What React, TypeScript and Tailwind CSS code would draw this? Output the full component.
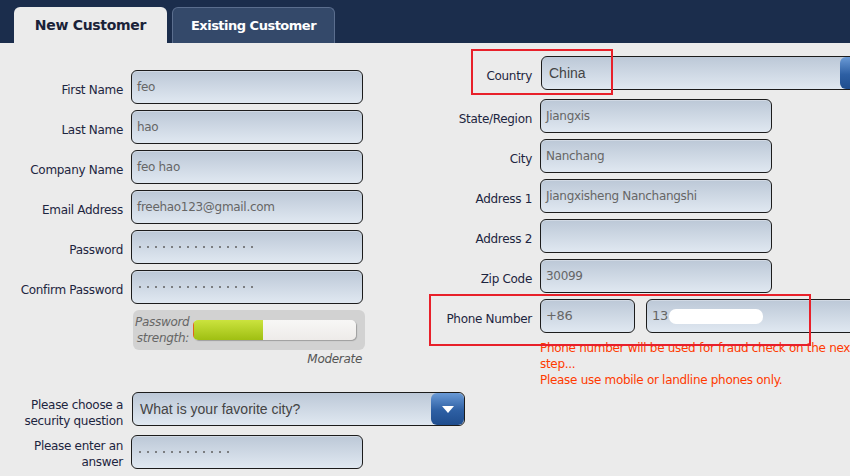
import React from "react";

const label = "font-['DejaVu_Sans',sans-serif] text-[12px] tracking-[-0.3px] text-[#1d2540]";
const field =
  "flex h-[34px] shrink-0 items-center rounded-[6px] border border-[#1c1c1c] bg-[linear-gradient(#bcc8d7,#e0e8f1)] px-[5px] font-['DejaVu_Sans',sans-serif] text-[12px] tracking-[-0.3px] text-[#666] shadow-[inset_0_1px_0_rgba(255,255,255,0.3)]";

function Dots({ count }: { count: number }) {
  return (
    <span className="flex gap-[6px] pl-[2px]">
      {Array.from({ length: count }).map((_, i) => (
        <span key={i} className="size-[2px] rounded-full bg-[#5f5f5f]" />
      ))}
    </span>
  );
}

function Row({
  name,
  children,
  width,
  pad = "pt-[6px]",
}: {
  name: React.ReactNode;
  children: React.ReactNode;
  width: string;
  pad?: string;
}) {
  return (
    <div className="flex items-center gap-[8px]">
      <div className={`${width} ${pad} shrink-0 text-right leading-[16px] ${label}`}>{name}</div>
      {children}
    </div>
  );
}

function Arrow() {
  return (
    <div className="flex h-full w-[33px] shrink-0 items-center justify-center rounded-[6px] bg-[linear-gradient(#6a9ad6,#2d5fa3_55%,#1f4d8e)]">
      <svg width="12" height="7" viewBox="0 0 12 7">
        <path d="M0 0h12L6 7z" fill="#fff" />
      </svg>
    </div>
  );
}

export default function App() {
  return (
    <div className="relative h-[476px] w-[850px] overflow-hidden bg-[#ebebeb]">
      <div className="flex h-[43px] items-end gap-[5px] bg-[#1b2d4c] pl-[14px]">
        <div className="flex h-[36px] w-[153px] items-center justify-center rounded-t-[6px] bg-[#ebebeb] pt-[1px] font-['DejaVu_Sans',sans-serif] text-[14px] font-bold tracking-[-0.3px] text-[#1a2238]">
          New Customer
        </div>
        <div className="flex h-[36px] w-[163px] items-center justify-center rounded-t-[6px] border border-b-0 border-[#5b6e8e] bg-[#34496a] font-['DejaVu_Sans',sans-serif] text-[13px] font-bold tracking-[-0.5px] text-white">
          Existing Customer
        </div>
      </div>

      <div className="flex">
        <div className="flex w-[430px] shrink-0 flex-col pt-[27px]">
          <div className="flex flex-col gap-[6px]">
            <Row name="First Name" width="w-[123px]">
              <div className={`${field} w-[232px]`}>feo</div>
            </Row>
            <Row name="Last Name" width="w-[123px]">
              <div className={`${field} w-[232px]`}>hao</div>
            </Row>
            <Row name="Company Name" width="w-[123px]">
              <div className={`${field} w-[232px]`}>feo hao</div>
            </Row>
            <Row name="Email Address" width="w-[123px]">
              <div className={`${field} w-[232px]`}>freehao123@gmail.com</div>
            </Row>
            <Row name="Password" width="w-[123px]">
              <div className={`${field} w-[232px]`}>
                <Dots count={15} />
              </div>
            </Row>
            <Row name="Confirm Password" width="w-[123px]">
              <div className={`${field} w-[232px]`}>
                <Dots count={15} />
              </div>
            </Row>
          </div>

          <div className="ml-[133px] mt-[6px] flex h-[40px] w-[232px] items-center gap-[4px] rounded-[6px] bg-[#d2d2d2] pl-[2px]">
            <div className="w-[54px] text-right font-['DejaVu_Sans',sans-serif] text-[12px] italic leading-[16px] tracking-[-0.3px] text-[#666]">
              Password strength:
            </div>
            <div className="flex h-[20px] w-[163px] overflow-hidden rounded-[5px] bg-[linear-gradient(#f8f7f6,#eeebe9)] shadow-[1px_1px_1px_rgba(0,0,0,0.25)]">
              <div className="h-full w-[70px] border-l border-[#e0661a] bg-[linear-gradient(#cbe33e,#9fbf12)]" />
            </div>
          </div>
          <div className="ml-[133px] mt-[1px] w-[229px] text-right font-['DejaVu_Sans',sans-serif] text-[12px] italic leading-[16px] tracking-[-0.3px] text-[#555]">
            Moderate
          </div>

          <div className="mt-[22px] flex flex-col gap-[5px]">
            <Row
              name={
                <>
                  Please choose a<br />security question
                </>
              }
              width="w-[123px]"
              pad="pt-[8px]"
            >
              <div className="ml-[1px] flex h-[34px] w-[333px] shrink-0 items-center rounded-[6px] border border-[#1c1c1c] bg-[linear-gradient(#bcc8d7,#e0e8f1)] font-['Liberation_Sans',sans-serif] text-[14px] text-[#444]">
                <span className="flex-1 pl-[7px]">What is your favorite city?</span>
                <Arrow />
              </div>
            </Row>
            <Row
              name={
                <>
                  Please enter an<br />answer
                </>
              }
              width="w-[123px]"
              pad="pt-[4px]"
            >
              <div className={`${field} w-[232px]`}>
                <Dots count={12} />
              </div>
            </Row>
          </div>
        </div>

        <div className="flex shrink-0 flex-col gap-[6px] pt-[13px]">
          <Row name="Country" width="w-[102px]">
            <div className="ml-[1px] flex h-[34px] w-[333px] shrink-0 items-center rounded-[6px] border border-[#1c1c1c] bg-[linear-gradient(#bcc8d7,#e0e8f1)] font-['Liberation_Sans',sans-serif] text-[14px] text-[#444]">
              <span className="flex-1 pl-[7px]">China</span>
              <Arrow />
            </div>
          </Row>
          <div className="mt-[3px]">
            <Row name="State/Region" width="w-[102px]">
              <div className={`${field} w-[232px]`}>Jiangxis</div>
            </Row>
          </div>
          <Row name="City" width="w-[102px]">
            <div className={`${field} w-[232px]`}>Nanchang</div>
          </Row>
          <Row name="Address 1" width="w-[102px]">
            <div className={`${field} w-[232px]`}>Jiangxisheng Nanchangshi</div>
          </Row>
          <Row name="Address 2" width="w-[102px]">
            <div className={`${field} w-[232px]`} />
          </Row>
          <Row name="Zip Code" width="w-[102px]">
            <div className={`${field} w-[232px]`}>30099</div>
          </Row>
          <Row name="Phone Number" width="w-[102px]">
            <div className="flex shrink-0 gap-[11px]">
              <div className={`${field} w-[95px] text-[13px]`}>+86</div>
              <div className={`${field} w-[232px] text-[13px]`}>
                13
                <span className="ml-[1px] h-[15px] w-[94px] rounded-[7px] bg-white" />
              </div>
            </div>
          </Row>
          <div className="mt-[1px] ml-[110px] w-[335px] font-['DejaVu_Sans',sans-serif] text-[12px] leading-[16px] tracking-[-0.3px] text-[#ff3a00]">
            <div>Phone number will be used for fraud check on the next step...</div>
            <div>Please use mobile or landline phones only.</div>
          </div>
        </div>
      </div>

      <div className="pointer-events-none absolute left-[471px] top-[49px] h-[46px] w-[142px] border-2 border-[#e8202a]" />
      <div className="pointer-events-none absolute left-[429px] top-[294px] h-[52px] w-[382px] border-2 border-[#e8202a]" />
    </div>
  );
}
